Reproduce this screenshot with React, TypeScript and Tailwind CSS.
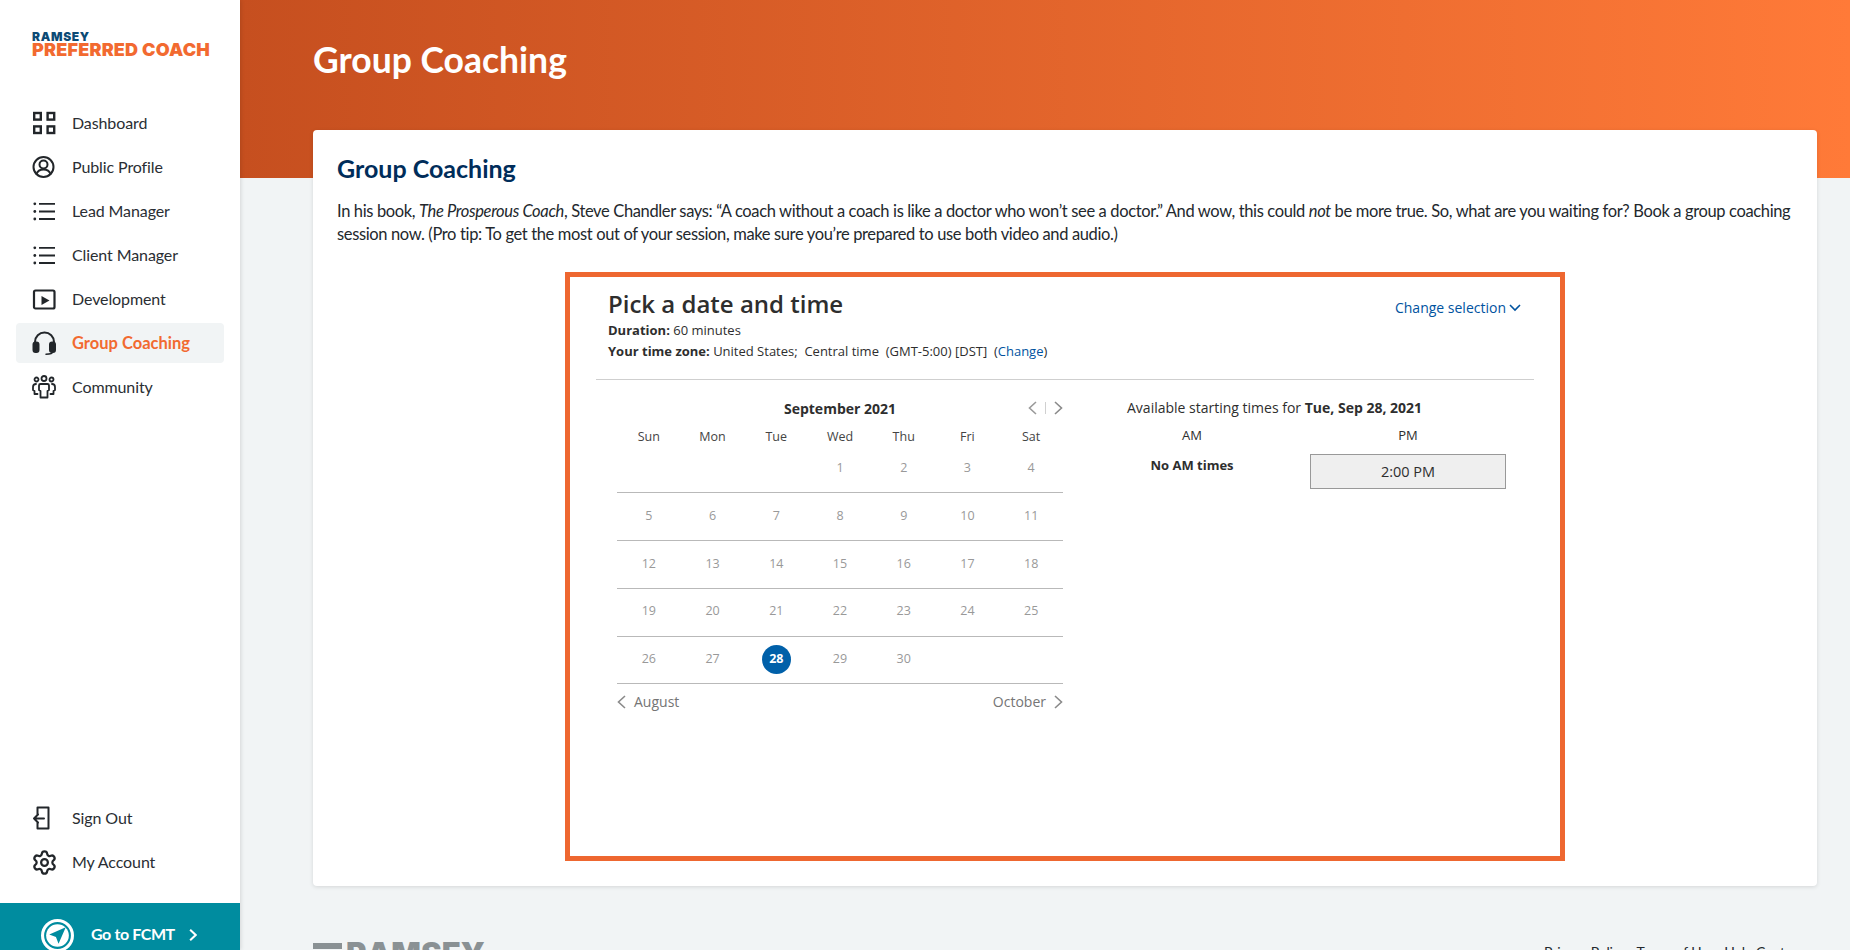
import React from "react";
import { Settings } from "lucide-react";

const S = { fill: "none", stroke: "#22262a", strokeWidth: 2, strokeLinecap: "round", strokeLinejoin: "round" } as const;
const Ico = ({ children }: { children: React.ReactNode }) => (
  <svg width="24" height="24" viewBox="0 0 24 24" className="shrink-0" {...S}>{children}</svg>
);

const ListIcon = () => (
  <Ico>
    <g fill="#22262a" stroke="none">
      <circle cx="2.800" cy="4.800" r="1.400" />
      <circle cx="2.800" cy="12.500" r="1.400" />
      <circle cx="2.800" cy="20" r="1.400" />
    </g>
    <path d="M7 4.800h16M7 12.500h16M7 20h16" strokeWidth="1.800" strokeLinecap="butt" />
  </Ico>
);

const nav: { label: string; icon: React.ReactNode; active?: boolean }[] = [
  { label: "Dashboard", icon: <Ico><g strokeWidth="2.400" strokeLinecap="butt" strokeLinejoin="miter"><rect x="2.200" y="2" width="6.600" height="6.600" /><rect x="15.600" y="2" width="6.600" height="6.600" /><rect x="2.200" y="15.400" width="6.600" height="6.600" /><rect x="15.600" y="15.400" width="6.600" height="6.600" /></g></Ico> },
  { label: "Public Profile", icon: <Ico><circle cx="11.500" cy="12" r="10" /><circle cx="11.500" cy="9.500" r="4" /><path d="M4.500 19c1-3 3.500-4.500 7-4.500s6 1.500 7 4.500" /></Ico> },
  { label: "Lead Manager", icon: <ListIcon /> },
  { label: "Client Manager", icon: <ListIcon /> },
  { label: "Development", icon: <Ico><rect x="2" y="3.500" width="20.500" height="18" rx="1.500" strokeWidth="2.200" /><path d="M9.500 9v9l8-4.500z" fill="#22262a" stroke="none" /></Ico> },
  { label: "Group Coaching", active: true, icon: <Ico><path d="M3 14v-3a9.500 9.500 0 0 1 19 0v3" /><rect x="1.500" y="11.500" width="5" height="9.500" rx="2" fill="#22262a" /><rect x="18" y="11.500" width="5" height="9.500" rx="2" fill="#22262a" /><path d="M20.500 21c0 1.500-2.500 2.200-6.500 2.200" strokeWidth="1.500" /></Ico> },
  { label: "Community", icon: <Ico><g strokeWidth="1.800"><circle cx="4.500" cy="4.500" r="2" /><circle cx="12" cy="3.500" r="2.500" /><circle cx="19.500" cy="4.500" r="2" /><path d="M4 9c-2 0-3 1-3 3v3l1.500 1v3h3" /><path d="M20 9c2 0 3 1 3 3v3l-1.500 1v3h-3" /><path d="M8.500 9h7c1 0 1.500.500 1.500 1.500V15l-1.500 1v6.500h-7V16L7 15v-4.500C7 9.500 7.500 9 8.500 9z" /></g></Ico> },
];

const NavItem = ({ label, icon, active }: { label: string; icon: React.ReactNode; active?: boolean }) => (
  <div className={`flex h-[40px] items-center gap-[16px] rounded-[4px] pl-[16px] ${active ? "bg-[#f1f4f5] text-[16.500px] font-bold text-[#f26a30]" : "text-[16px] tracking-[-0.1px] text-[#2a2e33]"}`}>
    {icon}
    <span>{label}</span>
  </div>
);

const Chev = ({ dir, color = "#8a8a8a", size = 14, w = 1.6 }: { dir: "l" | "r" | "d"; color?: string; size?: number; w?: number }) => (
  <svg width={size} height={size} viewBox="0 0 14 14" fill="none" stroke={color} strokeWidth={w} className="shrink-0">
    <path d={dir === "l" ? "M8 1 L1.500 7 L8 13" : dir === "r" ? "M6 1 L12.500 7 L6 13" : "M2 5 L7 10 L12 5"} />
  </svg>
);

const days = ["Sun", "Mon", "Tue", "Wed", "Thu", "Fri", "Sat"];
const weeks: (number | null)[][] = [
  [null, null, null, 1, 2, 3, 4],
  [5, 6, 7, 8, 9, 10, 11],
  [12, 13, 14, 15, 16, 17, 18],
  [19, 20, 21, 22, 23, 24, 25],
  [26, 27, 28, 29, 30, null, null],
];

const Calendar = () => (
  <div className="w-[446px] shrink-0">
    <div className="relative flex h-[20px] items-center justify-center text-[14px] font-bold text-[#2e2e2e]">
      September 2021
      <div className="absolute right-0 top-[3px] flex items-center gap-[3px]">
        <Chev dir="l" color="#9a9a9a" />
        <span className="h-[12px] w-px bg-[#d0d0d0]" />
        <Chev dir="r" color="#8a8a8a" />
      </div>
    </div>
    <div className="mt-[9px] grid h-[20px] grid-cols-7 items-center text-center text-[12.500px] text-[#444]">
      {days.map((d) => <div key={d}>{d}</div>)}
    </div>
    <div className="-mt-[1.500px]">
      {weeks.map((w, i) => (
        <div key={i} className="grid h-[47.800px] grid-cols-7 items-center border-b border-[#b9b9b9] pb-[1px] text-center text-[12.500px] text-[#999]">
          {w.map((d, j) => (
            <div key={j} className="flex justify-center">
              {d === 28 ? (
                <span className="flex h-[29px] w-[29px] items-center justify-center rounded-full bg-[#0060a9] font-bold text-white">{d}</span>
              ) : d}
            </div>
          ))}
        </div>
      ))}
    </div>
    <div className="mt-[7px] flex items-center justify-between text-[14px] text-[#757575]">
      <div className="flex items-center gap-[3px]"><Chev dir="l" /><span>August</span></div>
      <div className="flex items-center gap-[3px]"><span>October</span><Chev dir="r" /></div>
    </div>
  </div>
);

export default function App() {
  return (
    <div className="flex h-screen w-full overflow-hidden bg-[#f1f4f5] font-['Lato','Liberation_Sans',sans-serif]">
      <aside className="z-10 flex h-screen w-[240px] shrink-0 flex-col bg-white shadow-[1px_0_4px_rgba(0,0,0,0.12)]">
        <div className="pl-[32px] pt-[31px] font-['Inter',sans-serif] font-black leading-none">
          <div className="h-[10px] text-[12px] tracking-[0.7px] text-[#0b4a75]">RAMSEY</div>
          <div className="whitespace-nowrap text-[18px] tracking-[0.2px] text-[#f26a30]">PREFERRED COACH</div>
        </div>
        <nav className="mt-[44px] flex flex-col gap-[4px] px-[16px]">
          {nav.map((n) => <NavItem key={n.label} {...n} />)}
        </nav>
        <div className="mt-auto flex flex-col gap-[4px] px-[16px] pb-[21px]">
          <NavItem label="Sign Out" icon={<Ico><path d="M5.500 8V1.500h11v21h-11V17" /><path d="M12 12.500H2M6 8.500l-4 4 4 4" /></Ico>} />
          <NavItem label="My Account" icon={<Settings size={27} strokeWidth={2} color="#22262a" className="-m-[1.500px] shrink-0" />} />
        </div>
        <div className="flex h-[47px] shrink-0 items-start overflow-hidden bg-[#008c9f] pl-[41px] pt-[16px] font-bold text-white">
          <svg width="33" height="33" viewBox="0 0 32 32" className="shrink-0" fill="none">
            <circle cx="16" cy="16" r="14.500" stroke="#fff" strokeWidth="3" fill="#008c9f" />
            <circle cx="16" cy="16" r="11" fill="#fff" />
            <path d="M24 8 L8 15 L14.500 17.500 L17 24 Z" fill="#008c9f" />
          </svg>
          <span className="ml-[17px] mt-[4px] text-[16px] leading-[22px] tracking-[-0.4px]">Go to FCMT</span>
          <span className="ml-[10px] mt-[10px]"><Chev dir="r" color="#fff" size={12} w={2.4} /></span>
        </div>
      </aside>

      <main className="flex min-w-0 flex-1 flex-col">
        <header className="h-[178px] shrink-0 bg-gradient-to-r from-[#c64f1f] to-[#ff7a38] pl-[73px] pt-[38px] text-[35.500px] font-bold leading-[44px] text-white">
          Group Coaching
        </header>
        <section className="z-10 ml-[73px] mr-[33px] -mt-[48px] h-[756px] shrink-0 rounded-[4px] bg-white px-[24px] pt-[22px] shadow-[0_1px_4px_rgba(0,0,0,0.12)]">
          <h2 className="text-[25px] font-bold leading-[32px] text-[#002d5a]">Group Coaching</h2>
          <p className="mt-[16px] text-[16.500px] leading-[23px] tracking-[-0.36px] text-[#23282d]">
            In his book, <em>The Prosperous Coach</em>, Steve Chandler says: “A coach without a coach is like a doctor who won’t see a doctor.” And wow, this could <em>not</em> be more true. So, what are you waiting for? Book a group coaching session now. (Pro tip: To get the most out of your session, make sure you’re prepared to use both video and audio.)
          </p>
          <div className="mx-auto mt-[26px] h-[589px] w-[1000px] border-[5px] border-[#ee6730] px-[26px] pt-[11px] font-['Open_Sans',sans-serif] text-[#2e2e2e]">
            <div className="flex h-[92px] items-start justify-between border-b border-[#cfcfcf] px-[12px]">
              <div>
                <h3 className="text-[24px] font-semibold leading-[32px]">Pick a date and time</h3>
                <div className="mt-[1px] text-[13px] leading-[18px]"><b>Duration:</b> 60 minutes</div>
                <div className="mt-[3px] whitespace-pre text-[13px] leading-[18px]"><b>Your time zone:</b> United States;  Central time  (GMT-5:00) [DST]  (<span className="text-[#00539f]">Change</span>)</div>
              </div>
              <div className="mt-[8.500px] flex items-center gap-[2px] text-[14px] text-[#00539f]">Change selection <Chev dir="d" color="#00539f" size={14} /></div>
            </div>
            <div className="mt-[18px] flex pl-[21px]">
              <Calendar />
              <div className="ml-[64px] w-[380px]">
                <div className="h-[20px] text-[14px] leading-[20px]">Available starting times for <b>Tue, Sep 28, 2021</b></div>
                <div className="mt-[8px] flex items-start">
                  <div className="w-[130px] text-center text-[13px]">
                    <div className="leading-[18px]">AM</div>
                    <div className="mt-[12px] font-bold leading-[18px]">No AM times</div>
                  </div>
                  <div className="ml-[53px] w-[196px] text-center text-[13px]">
                    <div className="leading-[18px]">PM</div>
                    <div className="mt-[10px] flex h-[35px] items-center justify-center border border-[#999] bg-[#efefef] text-[14.500px]">2:00 PM</div>
                  </div>
                </div>
              </div>
            </div>
          </div>
        </section>
        <footer className="ml-[73px] mr-[53px] mt-[57px] flex shrink-0 items-start justify-between">
          <div className="flex items-start gap-[4px] text-[#8a9194]">
            <span className="h-[6px] w-[29px] bg-[#8a9194]" />
            <span className="-mt-[5px] font-['Inter',sans-serif] text-[31px] font-black leading-[32px]">RAMSEY</span>
          </div>
          <div className="flex gap-[10px] text-[14px] leading-[18px] tracking-[-0.15px] text-[#23282d]">
            <span>Privacy Policy</span><span>Terms of Use</span><span>Help Center</span>
          </div>
        </footer>
      </main>
    </div>
  );
}
